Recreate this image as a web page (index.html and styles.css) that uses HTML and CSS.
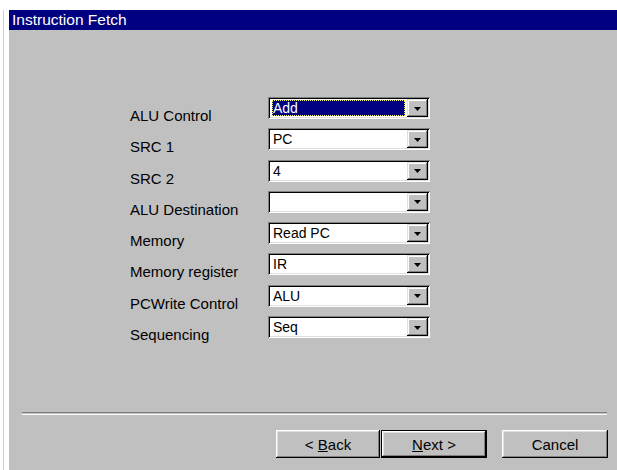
FILE: index.html
```html
<!DOCTYPE html>
<html lang="en">
<head>
<meta charset="utf-8">
<title>Instruction Fetch</title>
<link rel="stylesheet" href="styles.css">
</head>
<body>
<div class="frame">
  <div class="dialog">
    <div class="titlebar">Instruction Fetch</div>

    <div class="form">
      <div class="label">ALU Control</div>
      <div class="combo focused">
        <div class="value"><span class="selection">Add</span></div>
        <div class="drop"><svg width="7" height="4" viewBox="0 0 7 4"><polygon points="0,0 7,0 3.5,4" fill="#000"/></svg></div>
      </div>

      <div class="label">SRC 1</div>
      <div class="combo">
        <div class="value">PC</div>
        <div class="drop"><svg width="7" height="4" viewBox="0 0 7 4"><polygon points="0,0 7,0 3.5,4" fill="#000"/></svg></div>
      </div>

      <div class="label">SRC 2</div>
      <div class="combo">
        <div class="value">4</div>
        <div class="drop"><svg width="7" height="4" viewBox="0 0 7 4"><polygon points="0,0 7,0 3.5,4" fill="#000"/></svg></div>
      </div>

      <div class="label">ALU Destination</div>
      <div class="combo">
        <div class="value"></div>
        <div class="drop"><svg width="7" height="4" viewBox="0 0 7 4"><polygon points="0,0 7,0 3.5,4" fill="#000"/></svg></div>
      </div>

      <div class="label">Memory</div>
      <div class="combo">
        <div class="value">Read PC</div>
        <div class="drop"><svg width="7" height="4" viewBox="0 0 7 4"><polygon points="0,0 7,0 3.5,4" fill="#000"/></svg></div>
      </div>

      <div class="label">Memory register</div>
      <div class="combo">
        <div class="value">IR</div>
        <div class="drop"><svg width="7" height="4" viewBox="0 0 7 4"><polygon points="0,0 7,0 3.5,4" fill="#000"/></svg></div>
      </div>

      <div class="label">PCWrite Control</div>
      <div class="combo">
        <div class="value">ALU</div>
        <div class="drop"><svg width="7" height="4" viewBox="0 0 7 4"><polygon points="0,0 7,0 3.5,4" fill="#000"/></svg></div>
      </div>

      <div class="label">Sequencing</div>
      <div class="combo">
        <div class="value">Seq</div>
        <div class="drop"><svg width="7" height="4" viewBox="0 0 7 4"><polygon points="0,0 7,0 3.5,4" fill="#000"/></svg></div>
      </div>
    </div>

    <div class="spacer"></div>
    <div class="separator"></div>

    <div class="buttons">
      <button class="btn back">&lt; <u>B</u>ack</button>
      <button class="btn next default"><u>N</u>ext &gt;</button>
      <button class="btn cancel">Cancel</button>
    </div>
  </div>
</div>
</body>
</html>
```

FILE: styles.css
```css
html, body {
  margin: 0;
  padding: 0;
  background: #ffffff;
  width: 617px;
  height: 470px;
  overflow: hidden;
  font-family: "Liberation Sans", Arial, sans-serif;
  font-size: 15px;
}

/* outer window edge on the left */
.frame {
  margin-top: 10px;
  margin-left: 3px;
  border-left: 1px solid #cfcfcf;
  padding-left: 5px;
  height: 460px;
}

.dialog {
  background: #c0c0c0;
  height: 460px;
  display: flex;
  flex-direction: column;
}

.titlebar {
  height: 20px;
  line-height: 20px;
  font-size: 15.5px;
  background: #000080;
  color: #ffffff;
  padding-left: 3px;
  flex: none;
}

/* label / combo grid */
.form {
  margin-top: 67px;
  margin-left: 121px;
  display: grid;
  grid-template-columns: 138px 162px;
  grid-auto-rows: 31.3px;
  flex: none;
}

.label {
  color: #000;
  line-height: 17px;
  padding-top: 10px;
  white-space: nowrap;
}

.combo {
  height: 22px;
  box-sizing: border-box;
  background: #ffffff;
  padding: 2px;
  display: flex;
  box-shadow:
    inset 1px 1px #808080,
    inset -1px -1px #ffffff,
    inset 2px 2px #000000,
    inset -2px -2px #dfdfdf;
}

.value {
  flex: 1;
  padding-left: 3px;
  line-height: 18px;
  font-size: 14px;
  color: #000;
  display: flex;
}

.focused .value {
  padding: 1px 2px 1px 2px;
}

.selection {
  flex: 1;
  background: #000080;
  color: #ffffff;
  line-height: 16px;
  padding-left: 1px;
  outline: 1px dotted #ffff60;
  outline-offset: -1px;
}

.drop {
  width: 21px;
  height: 18px;
  flex: none;
  background: #c0c0c0;
  display: flex;
  align-items: center;
  justify-content: center;
  box-shadow:
    inset -1px -1px #000000,
    inset 1px 1px #dfdfdf,
    inset -2px -2px #808080,
    inset 2px 2px #ffffff;
}

.drop svg {
  display: block;
  margin-top: 1px;
}

.spacer {
  flex: 1;
}

/* etched rule above the buttons */
.separator {
  height: 1px;
  border-top: 1px solid #808080;
  border-bottom: 1px solid #ffffff;
  margin-left: 13px;
  margin-right: 10px;
  flex: none;
}

.buttons {
  display: flex;
  justify-content: flex-end;
  margin-top: 15px;
  margin-bottom: 12px;
  padding-right: 9px;
  flex: none;
}

.btn {
  height: 28px;
  box-sizing: border-box;
  background: #c0c0c0;
  border: none;
  margin: 0;
  padding: 0;
  font-family: "Liberation Sans", Arial, sans-serif;
  font-size: 15px;
  color: #000;
  box-shadow:
    inset -1px -1px #000000,
    inset 1px 1px #ffffff,
    inset -2px -2px #808080,
    inset 2px 2px #dfdfdf;
}

.back {
  width: 104px;
}

.next {
  width: 106px;
  margin-left: 1px;
}

.default {
  border: 1px solid #000000;
}

.cancel {
  width: 106px;
  margin-left: 15px;
}
```
